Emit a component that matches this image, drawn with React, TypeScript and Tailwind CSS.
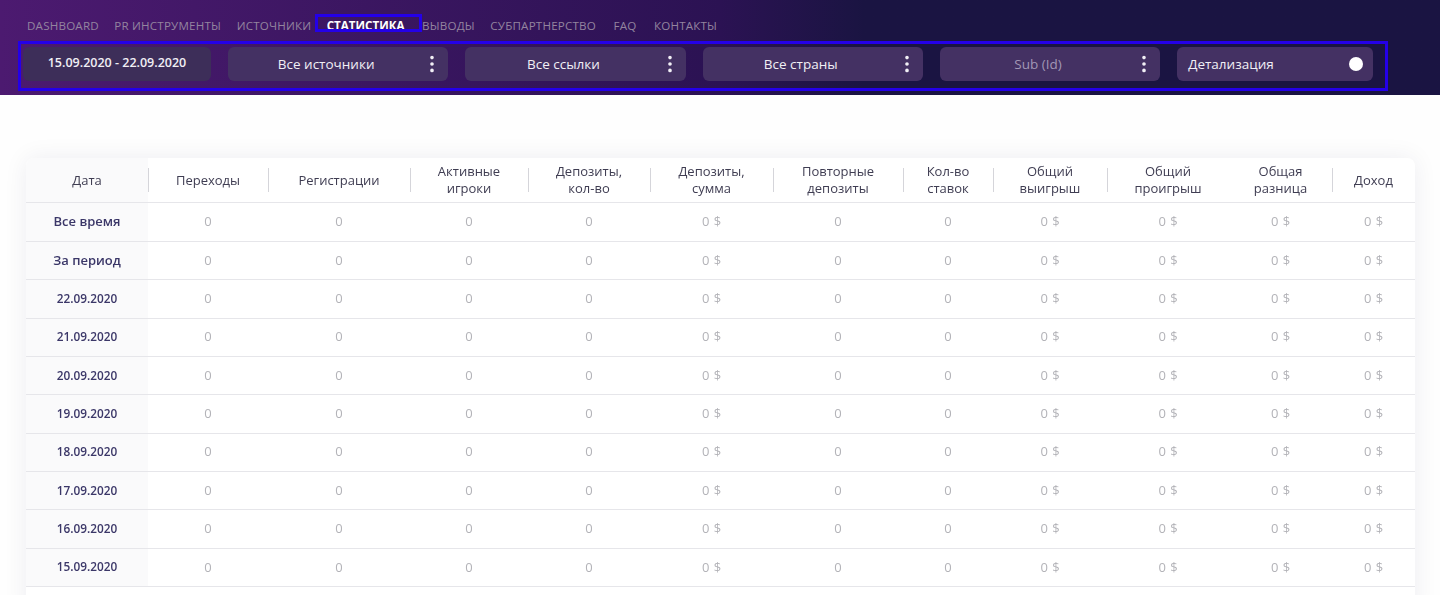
import { EllipsisVertical } from "lucide-react";

const nav = [
  { label: "DASHBOARD", className: "" },
  { label: "PR ИНСТРУМЕНТЫ", className: "" },
  { label: "ИСТОЧНИКИ", className: "" },
  { label: "СТАТИСТИКА", className: "" },
  { label: "ВЫВОДЫ", className: "ml-[2px]" },
  { label: "СУБПАРТНЕРСТВО", className: "" },
  { label: "FAQ", className: "ml-[2px]" },
  { label: "КОНТАКТЫ", className: "ml-[2px]" },
];

const columns = [
  { label: ["Дата"], width: "w-[122px]", sep: true },
  { label: ["Переходы"], width: "w-[120px]", sep: true },
  { label: ["Регистрации"], width: "w-[142px]", sep: true },
  { label: ["Активные", "игроки"], width: "w-[118px]", sep: true },
  { label: ["Депозиты,", "кол-во"], width: "w-[122px]", sep: true },
  { label: ["Депозиты,", "сумма"], width: "w-[123px]", sep: true },
  { label: ["Повторные", "депозиты"], width: "w-[130px]", sep: true },
  { label: ["Кол-во", "ставок"], width: "w-[90px]", sep: true },
  { label: ["Общий", "выигрыш"], width: "w-[114px]", sep: true },
  { label: ["Общий", "проигрыш"], width: "w-[122px]", sep: false },
  { label: ["Общая", "разница"], width: "w-[103px]", sep: true },
  { label: ["Доход"], width: "w-[83px]", sep: false },
];

const rows = ["Все время", "За период", "22.09.2020", "21.09.2020", "20.09.2020", "19.09.2020", "18.09.2020", "17.09.2020", "16.09.2020", "15.09.2020"];
const values = ["0", "0", "0", "0", "0 $", "0", "0", "0 $", "0 $", "0 $", "0 $"];

function Select({ label, muted }: { label: string; muted?: boolean }) {
  return (
    <div className="relative flex h-[34px] w-[220.3px] items-center justify-center rounded-md bg-[#443163] pr-[24px] text-[13.5px] font-medium">
      <span className={muted ? "text-[#a197b5]" : "text-[#f1eff5]"}>{label}</span>
      <EllipsisVertical className="absolute right-[5px] h-[22px] w-[22px] text-[#f1eff5]" strokeWidth={2} />
    </div>
  );
}

export default function App() {
  return (
    <div className="h-[595px] overflow-hidden bg-[#fefefe] font-['Open_Sans',sans-serif] antialiased">
      <header className="h-[95px] bg-gradient-to-r from-[#4c1a70] via-[#2b1253] via-50% to-[#1a1442] to-60% pt-[18px]">
        <nav className="flex h-[16px] items-center gap-[15.5px] pl-[27px] text-[11.6px] text-[#93849f]">
          {nav.map((item) =>
            item.label === "СТАТИСТИКА" ? (
              <span key={item.label} className="relative font-bold text-white">
                {item.label}
                <span className="absolute -top-[3px] -right-[17px] -left-[11.5px] h-[18px] border-[3px] border-[#2400e8]" />
              </span>
            ) : (
              <span key={item.label} className={`tracking-[0.2px] ${item.className}`}>
                {item.label}
              </span>
            ),
          )}
        </nav>
        <div className="mt-[7px] ml-[18px] flex h-[50px] w-[1370px] items-start gap-[17px] border-[3px] border-[#2400e8] pt-[3px] pl-[2px]">
          <div className="flex h-[34px] w-[188px] items-center justify-center rounded-md bg-[#3d2e59] pb-[2px] text-[12.5px] font-semibold text-[#f1eff5]">
            15.09.2020 - 22.09.2020
          </div>
          <Select label="Все источники" />
          <Select label="Все ссылки" />
          <Select label="Все страны" />
          <Select label="Sub (Id)" muted />
          <div className="flex h-[34px] w-[196px] items-center justify-between rounded-md bg-[#443163] pr-[10px] pl-[11px] text-[13.5px] font-medium text-[#f1eff5]">
            Детализация
            <span className="h-[14px] w-[14px] rounded-full bg-white" />
          </div>
        </div>
      </header>
      <main className="px-[26px] pt-[63px]">
        <div className="h-[460px] w-[1389px] rounded-t-lg bg-white shadow-[0_0_24px_rgba(30,20,70,0.07)] will-change-transform">
          <table className="w-full table-fixed border-collapse text-center">
            <thead>
              <tr className="h-[44px] border-b border-[#e6e6ea]">
                {columns.map((col, i) => (
                  <th
                    key={i}
                    className={`${col.width} relative p-0 text-[13px] leading-[17px] font-medium text-[#3f3d52] ${i === 0 ? "rounded-tl-lg bg-[#fafafb]" : ""}`}
                  >
                    {col.label.map((line) => (
                      <div key={line} className={col.label.length === 1 ? "pt-[2px]" : ""}>
                        {line}
                      </div>
                    ))}
                    {col.sep && <span className="absolute top-[10px] -right-px h-[24px] w-px bg-[#d5d5da]" />}
                  </th>
                ))}
              </tr>
            </thead>
            <tbody>
              {rows.map((row, i) => (
                <tr key={row} className={`${i === 0 ? "h-[39.35px]" : "h-[38.35px]"} border-b border-[#e6e6ea]`}>
                  <td className={`bg-[#fafafb] p-0 font-semibold text-[#3b3768] ${i < 2 ? "text-[13px]" : "text-[11.8px]"}`}>{row}</td>
                  {values.map((v, j) => (
                    <td key={j} className="p-0 text-[13px] [word-spacing:1px] text-[#b3b3b8]">
                      {v}
                    </td>
                  ))}
                </tr>
              ))}
            </tbody>
          </table>
        </div>
      </main>
    </div>
  );
}
